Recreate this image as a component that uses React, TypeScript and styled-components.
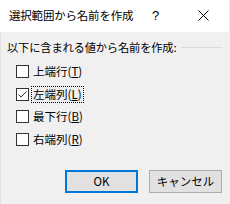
import React from 'react'
import styled, { createGlobalStyle } from 'styled-components';

const GlobalStyle = createGlobalStyle`
  html, body {
    margin: 0;
    padding: 0;
    background: #f0f0f0;
  }
  body {
    font-family: "Noto Sans CJK JP", "Noto Sans", sans-serif;
    font-size: 12px;
    color: #000;
  }
`;

interface OptionType {
    label: string;
    accel: string;
    checked?: boolean;
    focused?: boolean;
}

const options: OptionType[] = [
    { label: '上端行', accel: 'T' },
    { label: '左端列', accel: 'L', checked: true, focused: true },
    { label: '最下行', accel: 'B' },
    { label: '右端列', accel: 'R' },
];

const Option: React.FC<OptionType> = ({ label, accel, checked, focused }) => (

    <OptionRow>

        <Box>
            {checked && (
                <svg width="11" height="11" viewBox="0 0 11 11">
                    <path d="M1.5 5.5 L4 8 L9.5 2.5" fill="none" stroke="#333" strokeWidth="1" />
                </svg>
            )}
        </Box>

        <OptionLabel $focused={focused}>
            {label}(<u>{accel}</u>)
        </OptionLabel>

    </OptionRow>
);

export default function App() {

    return (
        <>
            <GlobalStyle />

            <Dialog>

                <TitleBar>
                    <Title>選択範囲から名前を作成</Title>
                    <HelpButton>?</HelpButton>
                    <CloseButton>
                        <svg width="11" height="11" viewBox="0 0 11 11">
                            <path d="M0.5 0.5 L10.5 10.5 M10.5 0.5 L0.5 10.5" stroke="#000" strokeWidth="1" />
                        </svg>
                    </CloseButton>
                </TitleBar>

                <Body>

                    <GroupHeader>
                        <GroupLabel>以下に含まれる値から名前を作成:</GroupLabel>
                        <GroupLine />
                    </GroupHeader>

                    <OptionList>
                        {options.map((o) => (
                            <Option key={o.accel} {...o} />
                        ))}
                    </OptionList>

                    <ButtonRow>
                        <Button $primary>OK</Button>
                        <Button>キャンセル</Button>
                    </ButtonRow>

                </Body>

            </Dialog>
        </>
    );
}

const Dialog = styled.div`
  width: 229px;
  height: 204px;
  display: flex;
  flex-direction: column;
  background: #f0f0f0;
  overflow: hidden;
`;

const TitleBar = styled.div`
  height: 32px;
  display: flex;
  align-items: center;
  background: #ffffff;
  padding-left: 9px;
  box-sizing: border-box;
`;

const Title = styled.div`
  flex: 1;
  font-size: 11.5px;
  letter-spacing: -0.2px;
  margin-top: -2px;
`;

const HelpButton = styled.div`
  width: 20px;
  font-size: 13px;
  font-family: "Liberation Sans", sans-serif;
  margin-right: 26px;
  margin-top: -2px;
`;

const CloseButton = styled.div`
  width: 30px;
  display: flex;
  align-items: center;
  margin-right: 1px;
  margin-top: -1px;
`;

const Body = styled.div`
  flex: 1;
  display: flex;
  flex-direction: column;
  border-left: 1px solid #e3e3e3;
  padding: 7px 0 0 6px;
`;

const GroupHeader = styled.div`
  display: flex;
  align-items: center;
  gap: 5px;
`;

const GroupLabel = styled.div`
  font-size: 11.3px;
  letter-spacing: -0.2px;
`;

const GroupLine = styled.div`
  flex: 1;
  height: 1px;
  background: #dcdcdc;
  margin-right: 7px;
  margin-top: 1px;
`;

const OptionList = styled.div`
  display: flex;
  flex-direction: column;
  gap: 9.5px;
  margin-top: 10px;
  padding-left: 9px;
`;

const OptionRow = styled.div`
  display: flex;
  align-items: center;
  height: 13px;
`;

const Box = styled.div`
  width: 13px;
  height: 13px;
  box-sizing: border-box;
  border: 1px solid #333333;
  background: #ffffff;
  display: flex;
  align-items: center;
  justify-content: center;
`;

const OptionLabel = styled.div<{ $focused?: boolean }>`
  margin-left: 3px;
  padding: 0 1px;
  font-size: 11.5px;
  line-height: 15px;
  outline: ${(p) => (p.$focused ? '1px dotted #000' : 'none')};

  u {
    text-decoration-thickness: 1px;
    text-underline-offset: 1px;
  }
`;

const ButtonRow = styled.div`
  display: flex;
  justify-content: flex-end;
  gap: 11px;
  margin-top: 24px;
  padding-right: 7px;
`;

const Button = styled.div<{ $primary?: boolean }>`
  width: 73px;
  height: 23px;
  box-sizing: border-box;
  display: flex;
  align-items: center;
  justify-content: center;
  background: #e1e1e1;
  border: ${(p) => (p.$primary ? '2px solid #0078d7' : '1px solid #adadad')};
  font-size: 11.5px;
`;
